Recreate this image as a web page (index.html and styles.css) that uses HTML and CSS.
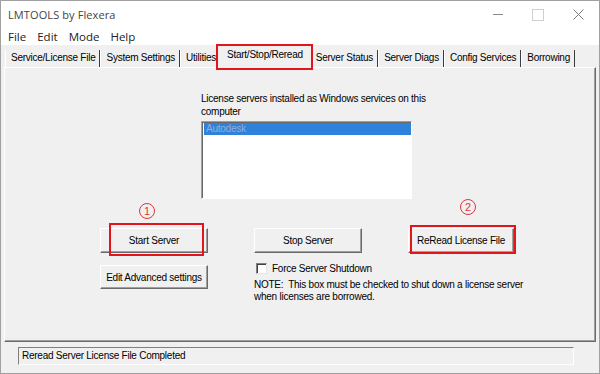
FILE: index.html
```html
<!DOCTYPE html>
<html lang="en">
<head>
    <meta charset="UTF-8">
    <meta name="viewport" content="width=device-width, initial-scale=1.0">
    <title>LMTOOLS by Flexera</title>
    <link rel="stylesheet" href="styles.css">
</head>
<body>
    <div class="window">
        <div class="titlebar">
            <span class="title">LMTOOLS by Flexera</span>
            <div class="controls">
                <span class="ctl ctl-min"></span>
                <span class="ctl ctl-max"></span>
                <span class="ctl ctl-close">
                    <svg width="11" height="11" viewBox="0 0 11 11"><path d="M0.5 0.5 L10.5 10.5 M10.5 0.5 L0.5 10.5" stroke="#7a7a7a" stroke-width="1" fill="none"/></svg>
                </span>
            </div>
        </div>
        <div class="menubar">
            <span class="menu-item">File</span>
            <span class="menu-item">Edit</span>
            <span class="menu-item">Mode</span>
            <span class="menu-item">Help</span>
        </div>
        <div class="client">
            <div class="tabs">
                <span class="tab">Service/License File</span>
                <span class="tab">System Settings</span>
                <span class="tab">Utilities</span>
                <span class="tab active">Start/Stop/Reread<span class="redbox"></span></span>
                <span class="tab">Server Status</span>
                <span class="tab">Server Diags</span>
                <span class="tab">Config Services</span>
                <span class="tab">Borrowing</span>
            </div>
            <div class="panel">
                <div class="services">
                    <div class="services-label">License servers installed as Windows services on this<br>computer</div>
                    <div class="listbox">
                        <div class="list-item selected">Autodesk</div>
                    </div>
                </div>
                <div class="actions">
                    <div class="mark mark-start">
                        <span class="step">1</span>
                        <button class="btn">Start Server</button>
                        <span class="redbox"></span>
                    </div>
                    <div class="mark">
                        <button class="btn">Stop Server</button>
                    </div>
                    <div class="mark mark-reread">
                        <span class="step">2</span>
                        <button class="btn btn-reread">ReRead License File</button>
                        <span class="redbox"></span>
                    </div>
                    <button class="btn btn-advanced">Edit Advanced settings</button>
                    <label class="check">
                        <span class="checkbox"></span>
                        Force Server Shutdown
                    </label>
                    <p class="note">NOTE:&nbsp; This box must be checked to shut down a license server<br>when licenses are borrowed.</p>
                </div>
            </div>
            <div class="statusbar">
                <div class="status">Reread Server License File Completed</div>
            </div>
        </div>
    </div>
</body>
</html>
```

FILE: styles.css
```css
/* window frame */
* {
  box-sizing: border-box;
}

body {
  margin: 0;
  font-family: "Liberation Sans", Arial, sans-serif;
  font-size: 10px;
  letter-spacing: -0.25px;
  color: #000;
  background-color: #fff;
}

.window {
  width: 600px;
  height: 374px;
  border: 1px solid #a0a0a0;
  display: flex;
  flex-direction: column;
  background-color: #fff;
  overflow: hidden;
}

.titlebar {
  height: 27px;
  display: flex;
  align-items: center;
  padding-left: 7px;
}

.title {
  font-family: "Open Sans", "Liberation Sans", sans-serif;
  font-size: 11px;
  color: #444;
  letter-spacing: 0.1px;
}

.controls {
  margin-left: auto;
  margin-right: 1px;
  display: flex;
  height: 100%;
}

.ctl {
  width: 40px;
  display: flex;
  align-items: center;
  justify-content: center;
}

.ctl-min::before {
  content: '';
  width: 10px;
  height: 1px;
  background: #8a8a8a;
}

.ctl-max::before {
  content: '';
  width: 10px;
  height: 10px;
  border: 1px solid #d0d0d0;
}

/* menu */
.menubar {
  height: 17px;
  display: flex;
  align-items: center;
  gap: 11px;
  padding-left: 7px;
  font-family: "Open Sans", "Liberation Sans", sans-serif;
  font-size: 11.5px;
  letter-spacing: 0;
  color: #222;
}

/* client area */
.client {
  flex: 1;
  background-color: #f0f0f0;
  padding: 0 3px;
  display: flex;
  flex-direction: column;
}

.tabs {
  height: 22px;
  display: flex;
  align-items: flex-end;
  padding-left: 1px;
}

.tab {
  height: 17px;
  line-height: 16px;
  padding: 0 4px 0 5px;
  border-left: 1px solid #fff;
  border-right: 1px solid #3c3c3c;
  white-space: nowrap;
}

.tab.active {
  position: relative;
  height: 23px;
  line-height: 18px;
  padding: 0 8px 0 9px;
  margin: 0 -2px -1px -4px;
  border-top: 1px solid #fff;
  border-right-color: #555;
  background-color: #f0f0f0;
  z-index: 1;
}

.tab.active .redbox {
  top: -2px;
  left: -2px;
  right: -2px;
  bottom: -2px;
}

.redbox {
  position: absolute;
  border: 2px solid #e2151d;
  pointer-events: none;
}

.panel {
  height: 275px;
  border-top: 1px solid #fff;
  border-left: 1px solid #fff;
  border-right: 1px solid #6a6a6a;
  border-bottom: 1px solid #6a6a6a;
  box-shadow: inset -1px -1px 0 #a0a0a0;
  padding-top: 24px;
}

/* services list */
.services {
  margin-left: 196px;
}

.services-label {
  line-height: 13px;
  white-space: nowrap;
  margin-bottom: 3px;
}

.listbox {
  width: 211px;
  height: 78px;
  background-color: #fff;
  border-top: 1px solid #a0a0a0;
  border-left: 1px solid #a0a0a0;
  border-right: 1px solid #fff;
  border-bottom: 1px solid #fff;
  box-shadow: inset 1px 1px 0 #696969;
  padding: 1px 0 0 2px;
}

.list-item {
  height: 12px;
  line-height: 12px;
  padding-left: 2px;
}

.list-item.selected {
  background-color: #2f82dc;
  color: #93aed0;
}

/* buttons area */
.actions {
  display: grid;
  grid-template-columns: 108px 108px 106px;
  column-gap: 46px;
  margin-left: 95px;
  padding-top: 29px;
}

.mark {
  position: relative;
  height: 25px;
}

.mark-start .redbox {
  top: -5px;
  left: 9px;
  right: 4px;
  bottom: -3px;
}

.mark-reread .redbox {
  top: -3px;
  left: 2px;
  right: -2px;
  bottom: -1px;
}

.step {
  position: absolute;
  width: 16px;
  height: 16px;
  border: 1px solid #e3343a;
  border-radius: 50%;
  color: #e3343a;
  font-size: 11px;
  line-height: 14px;
  letter-spacing: 0;
  text-align: center;
}

.mark-start .step {
  left: 39px;
  top: -25px;
}

.mark-reread .step {
  left: 52px;
  top: -29px;
}

.btn {
  width: 100%;
  height: 25px;
  padding: 0;
  font-family: "Liberation Sans", Arial, sans-serif;
  font-size: 10px;
  letter-spacing: -0.25px;
  color: #000;
  background-color: #f0f0f0;
  border-top: 1px solid #fff;
  border-left: 1px solid #fff;
  border-right: 1px solid #6a6a6a;
  border-bottom: 1px solid #6a6a6a;
  box-shadow: inset -1px -1px 0 #a0a0a0;
}

.btn-advanced {
  grid-column: 1;
  grid-row: 2 / span 2;
  margin-top: 12px;
  height: 24px;
}

.check {
  grid-column: 2 / span 2;
  grid-row: 2;
  display: flex;
  align-items: center;
  gap: 5px;
  margin-top: 9px;
  padding-left: 2px;
  height: 12px;
}

.checkbox {
  width: 11px;
  height: 11px;
  background-color: #fff;
  border-top: 1px solid #808080;
  border-left: 1px solid #808080;
  border-right: 1px solid #e6e6e6;
  border-bottom: 1px solid #e6e6e6;
  box-shadow: inset 1px 1px 0 #404040;
}

.note {
  grid-column: 2 / span 2;
  grid-row: 3;
  margin: 5px 0 0;
  line-height: 12px;
  white-space: nowrap;
}

/* status bar */
.statusbar {
  flex: 1;
  padding: 5px 0 0 14px;
}

.status {
  width: 556px;
  height: 18px;
  line-height: 16px;
  padding-left: 3px;
  border-top: 1px solid #808080;
  border-left: 1px solid #808080;
  border-right: 1px solid #fff;
  border-bottom: 1px solid #fff;
}
```
